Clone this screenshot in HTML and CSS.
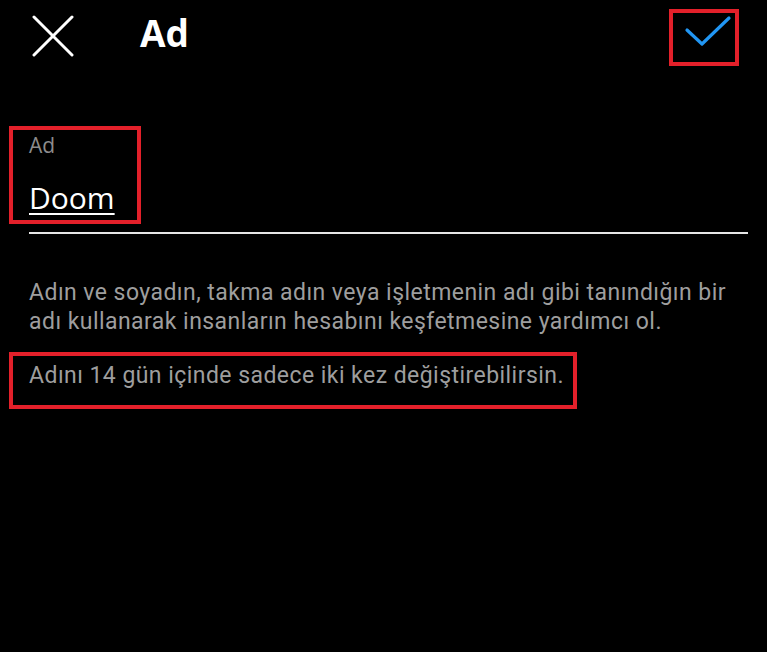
FILE: index.html
```html
<!DOCTYPE html>
<html lang="tr">
<head>
    <meta charset="UTF-8">
    <meta name="viewport" content="width=device-width, initial-scale=1.0">
    <title>Ad</title>
    <link rel="stylesheet" href="styles.css">
</head>
<body>

    <header class="topbar">
        <button class="icon-btn close-btn" aria-label="Kapat">
            <svg width="42" height="42" viewBox="0 0 42 42">
                <path d="M2 2 L40 40 M40 2 L2 40" stroke="#fff" stroke-width="3" stroke-linecap="round" fill="none"/>
            </svg>
        </button>
        <h1 class="title">Ad</h1>
        <button class="icon-btn done-btn" aria-label="Kaydet">
            <svg width="62" height="49" viewBox="0 0 62 49">
                <path d="M14 17 L29 31 L56 5" stroke="#2196f3" stroke-width="3.2" stroke-linecap="round" stroke-linejoin="round" fill="none"/>
            </svg>
        </button>
    </header>

    <main class="content">
        <div class="field">
            <div class="field-box">
                <label for="name">Ad</label>
                <div class="value" id="name">Doom</div>
            </div>
            <div class="field-line"></div>
        </div>

        <p class="help">Adın ve soyadın, takma adın veya işletmenin adı gibi tanındığın bir adı kullanarak insanların hesabını keşfetmesine yardımcı ol.</p>
        <p class="help note">Adını 14 gün içinde sadece iki kez değiştirebilirsin.</p>
    </main>

</body>
</html>
```

FILE: styles.css
```css
body {
    margin: 0;
    padding: 0;
    background-color: #000;
    color: #fff;
    font-family: Roboto, "Open Sans", sans-serif;
}
.topbar {
    display: flex;
    align-items: center;
    height: 75px;
    padding: 0 28px 0 32px;
}
.icon-btn {
    background: none;
    border: none;
    padding: 0;
    cursor: pointer;
    display: flex;
    align-items: center;
    justify-content: center;
}
.close-btn {
    width: 42px;
    height: 42px;
    margin-bottom: 3px;
}
.title {
    margin: 0 0 10px 66px;
    font-family: "Open Sans", sans-serif;
    font-size: 37px;
    font-weight: 700;
    flex: 1;
}
.done-btn {
    width: 70px;
    height: 57px;
    border: 4px solid #e3202a;
}
.content {
    padding: 51px 19px 0 29px;
}
.field-box {
    width: fit-content;
    margin-left: -20px;
    padding: 0 22px 2px 16px;
    border: 4px solid #e3202a;
}
.field-box label {
    display: block;
    font-family: "Open Sans", sans-serif;
    font-size: 21px;
    color: #8c8c8c;
    line-height: 30px;
}
.value {
    font-family: "Open Sans", sans-serif;
    font-size: 30px;
    line-height: 40px;
    margin-top: 18px;
    text-decoration: underline;
    text-decoration-thickness: 2px;
    text-underline-offset: 4px;
}
.field-line {
    height: 2px;
    background-color: #e6e6e6;
    margin-top: 8px;
}
.help {
    margin: 44px 0 0;
    font-size: 23px;
    letter-spacing: 0.45px;
    line-height: 29px;
    color: #9e9e9e;
}
.note {
    display: inline-block;
    margin: 16px 0 0 -20px;
    padding: 5px 9px 15px 16px;
    border: 4px solid #e3202a;
}
```
